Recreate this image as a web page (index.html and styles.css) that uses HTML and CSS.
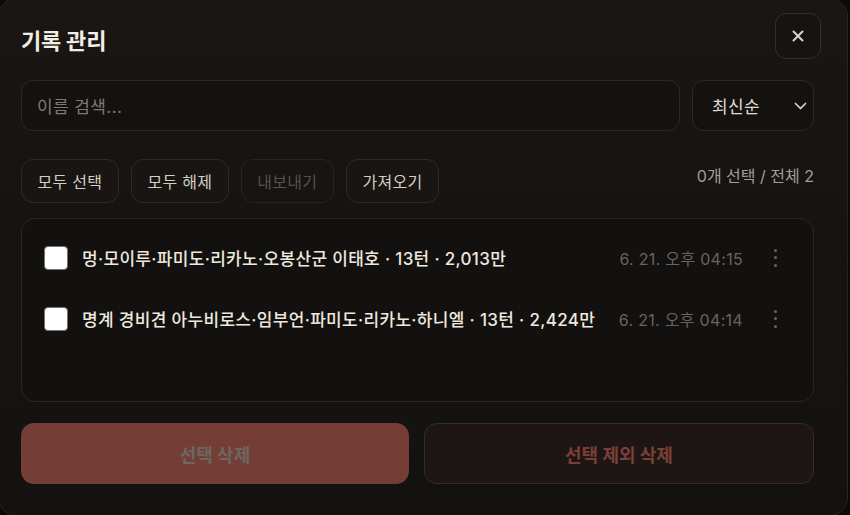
FILE: index.html
```html
<!DOCTYPE html>
<html lang="ko">
<head>
<meta charset="utf-8">
<title>기록 관리</title>
<link rel="stylesheet" href="styles.css">
</head>
<body>
<div class="modal">
  <header class="modal-head">
    <h1 class="modal-title">기록 관리</h1>
    <button class="close-btn" aria-label="닫기">
      <svg width="12" height="12" viewBox="0 0 12 12"><path d="M1.5 1.5 L10.5 10.5 M10.5 1.5 L1.5 10.5" stroke="#d9d3cb" stroke-width="2" stroke-linecap="round"/></svg>
    </button>
  </header>

  <div class="search-row">
    <div class="search-box">이름 검색...</div>
    <div class="sort-select">
      <span>최신순</span>
      <svg width="13" height="8" viewBox="0 0 13 8"><path d="M1.5 1.5 L6.5 6.5 L11.5 1.5" fill="none" stroke="#d9d3cb" stroke-width="1.7" stroke-linecap="round" stroke-linejoin="round"/></svg>
    </div>
  </div>

  <div class="toolbar">
    <div class="tool-group">
      <button class="tool-btn">모두 선택</button>
      <button class="tool-btn">모두 해제</button>
      <button class="tool-btn is-disabled">내보내기</button>
      <button class="tool-btn">가져오기</button>
    </div>
    <div class="count">0개 선택 / 전체 2</div>
  </div>

  <div class="record-list">
    <div class="record">
      <span class="check"></span>
      <span class="record-name">멍·모이루·파미도·리카노·오봉산군 이태호 · 13턴 · 2,013만</span>
      <span class="record-date">6. 21. 오후 04:15</span>
      <span class="kebab"><i></i><i></i><i></i></span>
    </div>
    <div class="record">
      <span class="check"></span>
      <span class="record-name">명계 경비견 아누비로스·임부언·파미도·리카노·하니엘 · 13턴 · 2,424만</span>
      <span class="record-date">6. 21. 오후 04:14</span>
      <span class="kebab"><i></i><i></i><i></i></span>
    </div>
  </div>

  <div class="actions">
    <button class="action-btn danger">선택 삭제</button>
    <button class="action-btn danger-outline">선택 제외 삭제</button>
  </div>
</div>
</body>
</html>
```

FILE: styles.css
```css
* { box-sizing: border-box; }

html, body {
  margin: 0;
  height: 100%;
  overflow: hidden;
  background: #0b0a09;
}

body {
  font-family: Inter, "Noto Sans CJK KR", sans-serif;
  color: #eee8df;
}

button {
  font-family: inherit;
  cursor: pointer;
}

.modal {
  width: 850px;
  height: 518px;
  margin: -2px 0 0 -2px;
  padding: 14px 33px 0 22px;
  border: 1px solid #29241f;
  border-radius: 18px;
  background: linear-gradient(180deg, #191613 0%, #161412 45%, #131210 100%);
  display: flex;
  flex-direction: column;
}

/* header */
.modal-head {
  display: flex;
  justify-content: space-between;
  align-items: flex-start;
  margin-right: -7px;
}

.modal-title {
  margin: 14px 0 0;
  font-size: 22px;
  line-height: 28px;
  font-weight: 700;
  color: #f2ede5;
  letter-spacing: -0.2px;
}

.close-btn {
  width: 46px;
  height: 46px;
  border: 1px solid #332e28;
  border-radius: 11px;
  background: #161412;
  display: flex;
  align-items: center;
  justify-content: center;
  padding: 0;
}

/* search */
.search-row {
  display: flex;
  gap: 12px;
  margin-top: 21px;
  height: 51px;
}

.search-box {
  flex: 1;
  border: 1px solid #2e2924;
  border-radius: 12px;
  background: #141210;
  padding: 0 15px;
  display: flex;
  align-items: center;
  font-size: 17px;
  letter-spacing: 0.4px;
  color: #7f7972;
}

.sort-select {
  width: 122px;
  border: 1px solid #2e2924;
  border-radius: 12px;
  background: #141210;
  padding: 0 6px 0 19px;
  display: flex;
  align-items: center;
  justify-content: space-between;
  font-size: 17px;
  letter-spacing: 0.3px;
  color: #e2dcd4;
}

/* toolbar */
.toolbar {
  display: flex;
  justify-content: space-between;
  align-items: flex-start;
  margin-top: 28px;
}

.tool-group {
  display: flex;
  gap: 12px;
}

.tool-btn {
  height: 44px;
  padding: 0 15.5px;
  border: 1px solid #302a25;
  border-radius: 12px;
  background: #181512;
  font-size: 16px;
  letter-spacing: 0.3px;
  color: #d4cec6;
}

.tool-btn.is-disabled {
  color: #57514b;
  border-color: #2a2220;
  background: #171412;
  cursor: default;
}

.count {
  padding-top: 6px;
  font-size: 16px;
  line-height: 22px;
  color: #a49e96;
}

/* list */
.record-list {
  margin-top: 15px;
  height: 184px;
  border: 1px solid #2b2621;
  border-radius: 14px;
  background: #121110;
  padding: 8px 24px 0 22px;
}

.record {
  height: 61px;
  display: flex;
  align-items: center;
}

.check {
  width: 24px;
  height: 24px;
  flex: none;
  border: 1px solid #77726c;
  border-radius: 4px;
  background: #ffffff;
}

.record-name {
  margin-left: 14px;
  flex: 1;
  font-size: 17px;
  letter-spacing: 0.32px;
  font-weight: 500;
  color: #eee8df;
  white-space: nowrap;
}

.record-date {
  font-size: 16px;
  letter-spacing: 0.3px;
  color: #6a645d;
}

.kebab {
  width: 28px;
  margin-left: 18px;
  height: 22px;
  display: flex;
  flex-direction: column;
  align-items: center;
  justify-content: space-between;
  padding: 2px 0;
}

.kebab i {
  width: 3px;
  height: 3px;
  border-radius: 50%;
  background: #6a645d;
}

/* footer actions */
.actions {
  display: flex;
  gap: 15px;
  margin-top: 21px;
}

.action-btn {
  flex: 1;
  height: 61px;
  border-radius: 13px;
  font-size: 18px;
  font-weight: 700;
}

.action-btn.danger {
  border: none;
  background: #743d35;
  color: #6c6761;
}

.action-btn.danger-outline {
  border: 1px solid #382c26;
  background: #1e1614;
  color: #7a3f36;
}
```
